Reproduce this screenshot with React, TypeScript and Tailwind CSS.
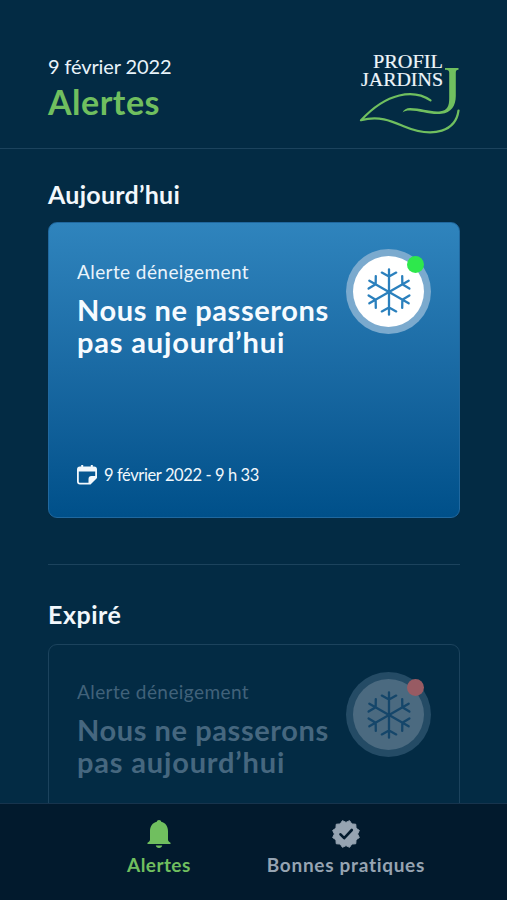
import React from 'react';

function Logo() {
  return (
    <svg className="block w-[104px] h-[86px]" viewBox="0 0 104 86" fill="none">
      <text
        x="16"
        y="18"
        textLength="70"
        lengthAdjust="spacingAndGlyphs"
        fontSize="19.500"
        fill="#eef5fa"
        stroke="#eef5fa"
        strokeWidth="0.2"
        className="font-['Liberation_Serif',serif]"
      >
        PROFIL
      </text>
      <text
        x="4"
        y="36"
        textLength="82"
        lengthAdjust="spacingAndGlyphs"
        fontSize="19.500"
        fill="#eef5fa"
        stroke="#eef5fa"
        strokeWidth="0.2"
        className="font-['Liberation_Serif',serif]"
      >
        JARDINS
      </text>
      <path
        d="M88 18h13.500v1.800c-2.200.3-2.700 1-2.700 3V46c0 10-4.700 16.700-14.300 17.800-11 1.300-22-3.600-32-3.400-3 0-4.700.6-7 2 1.500-2.800 4-4.400 7.500-4.400 11 0 21 4.400 30.500 3.200 7-.9 8.700-5.200 8.700-13V22.800c0-2.200-.8-2.700-4.200-3z"
        fill="#70bf5f"
      />
      <path
        d="M73.500 50.300C57 39 30 42 4 70.300c18-5 31 1 42 5.700 32 13.500 53 4 55.500-15.500"
        stroke="#70bf5f"
        strokeWidth="2.200"
        strokeLinejoin="round"
        strokeLinecap="round"
      />
    </svg>
  );
}

function Snowflake({ className }: { className: string }) {
  return (
    <svg
      className={className}
      viewBox="-24 -24 48 48"
      fill="none"
      stroke="currentColor"
      strokeWidth="2.300"
      strokeLinecap="round"
      strokeLinejoin="round"
    >
      {[0, 60, 120, 180, 240, 300].map((angle) => (
        <path key={angle} transform={`rotate(${angle})`} d="M0 0V-22.700M-7.200-19.400 0-15.400l7.200-4" />
      ))}
    </svg>
  );
}

function CalendarIcon() {
  return (
    <svg className="w-5 h-5 shrink-0" viewBox="0 0 20 20">
      <path
        fill="currentColor"
        fillRule="evenodd"
        d="M4.200 0h2v1.500h7.600V0h2v1.500H17a3 3 0 0 1 3 3V13l-6.500 6.500H3a3 3 0 0 1-3-3v-12a3 3 0 0 1 3-3h1.200zM1.800 6.500v10c0 .8.500 1.300 1.300 1.300H11.500V14a3 3 0 0 1 3-3h3.700V6.500z"
      />
    </svg>
  );
}

function BellIcon() {
  return (
    <svg className="w-6 h-7" viewBox="0 0 24 28" fill="currentColor">
      <path d="M12 0c1.300 0 2 .8 2.200 1.800C18.400 2.800 21 6.300 21 11v8.500c0 1.500.8 2.300 2.500 3.200V24H.500v-1.300C2.200 21.800 3 21 3 19.500V11c0-4.700 2.600-8.200 6.800-9.200C10 .8 10.700 0 12 0z" />
      <path d="M8.800 25.500h6.400c-.3 1.600-1.400 2.500-3.200 2.500s-2.900-.9-3.200-2.500z" />
    </svg>
  );
}

// 12-pointed seal with a check mark
const sealPoints = Array.from({ length: 24 }, (_, i) => {
  const radius = i % 2 === 0 ? 11.6 : 13.8;
  const angle = (i * Math.PI) / 12;
  return `${(radius * Math.sin(angle)).toFixed(2)},${(radius * -Math.cos(angle)).toFixed(2)}`;
}).join(' ');

function SealIcon() {
  return (
    <svg className="size-7" viewBox="-14 -14 28 28">
      <polygon
        points={sealPoints}
        fill="currentColor"
        stroke="currentColor"
        strokeWidth="1"
        strokeLinejoin="round"
      />
      <path
        d="M-5.500.3-1.800 4.200 5.800-4"
        fill="none"
        stroke="#021a2d"
        strokeWidth="2.600"
        strokeLinecap="round"
        strokeLinejoin="round"
      />
    </svg>
  );
}

function AlertCardHeader({ expired = false }: { expired?: boolean }) {
  return (
    <div className="flex justify-between">
      <div className={expired ? 'pt-2' : 'pt-[11px]'}>
        <p className={`text-[19px] leading-6 tracking-[0.42px] ${expired ? 'text-[#41627a]' : 'text-[#eaf4fc]'}`}>
          Alerte déneigement
        </p>
        <h3
          className={`mt-[10px] text-[29px] leading-8 font-bold whitespace-nowrap ${
            expired ? 'text-[#46677f]' : 'text-[#f6fbff]'
          }`}
        >
          <span className="block w-0 tracking-[0.58px]">Nous ne passerons</span>
          <span className="block w-0 tracking-[0.82px]">pas aujourd’hui</span>
        </h3>
      </div>
      <div
        className={`relative size-[85px] shrink-0 rounded-full flex items-center justify-center ${
          expired ? 'bg-[#244b65]' : 'bg-[#7baace]'
        }`}
      >
        <div
          className={`size-[71px] rounded-full flex items-center justify-center ${
            expired ? 'bg-[#4b6a80]' : 'bg-white'
          }`}
        >
          <Snowflake className={`size-12 ${expired ? 'text-[#15466a]' : 'text-[#2b80bd]'}`} />
        </div>
        <span
          className={`absolute top-[7px] right-[7px] size-[17px] rounded-full ${
            expired ? 'bg-[#985b63]' : 'bg-[#2ee84c]'
          }`}
        />
      </div>
    </div>
  );
}

function App() {
  return (
    <div className="h-[900px] w-full overflow-hidden flex flex-col bg-[#032b44] text-[#f2f8fc] font-[Lato,sans-serif]">
      <header className="h-[149px] shrink-0 flex justify-between pl-12 pr-[46px] pt-[50px] border-b border-[#1c435d]">
        <div className="pt-1">
          <p className="text-xl leading-6 tracking-[-0.12px] text-[#e9f3fa]">9 février 2022</p>
          <h1 className="mt-1 text-[34px] leading-10 tracking-[0.5px] font-bold text-[#70bf5f]">Alertes</h1>
        </div>
        <Logo />
      </header>

      <main className="flex-1 min-h-0 overflow-hidden pl-12 pr-[47px] pt-[29px]">
        <h2 className="text-[25px] leading-8 tracking-[0.25px] font-bold">Aujourd’hui</h2>
        <section className="mt-3 h-[296px] rounded-[9px] border border-[#20689f] bg-linear-to-b from-[#2f84bd] to-[#00508a] pt-[26px] px-7 pb-[30px] flex flex-col justify-between">
          <AlertCardHeader />
          <div className="flex items-center gap-[7px]">
            <CalendarIcon />
            <span className="text-[16.5px] leading-6 tracking-[-0.4px]">9 février 2022 - 9 h 33</span>
          </div>
        </section>

        <hr className="mt-[46px] border-[#1c435d]" />

        <h2 className="mt-[33px] text-[25px] leading-8 tracking-[0.5px] font-bold">Expiré</h2>
        <section className="mt-[14px] h-[295px] rounded-[9px] border border-[#1c435d] pt-[27px] px-7">
          <AlertCardHeader expired />
        </section>
      </main>

      <nav className="h-[97px] shrink-0 border-t border-[#17344d] bg-[#021a2d] flex justify-center gap-[76px] pl-[45px] pt-4 text-[19px] leading-6 font-bold">
        <a className="flex flex-col items-center text-[#70bf5f]">
          <BellIcon />
          <span className="mt-[5px] tracking-[0.45px]">Alertes</span>
        </a>
        <a className="flex flex-col items-center text-[#96a4b2]">
          <SealIcon />
          <span className="mt-[5px] tracking-[0.7px]">Bonnes pratiques</span>
        </a>
      </nav>
    </div>
  );
}

export default App;
